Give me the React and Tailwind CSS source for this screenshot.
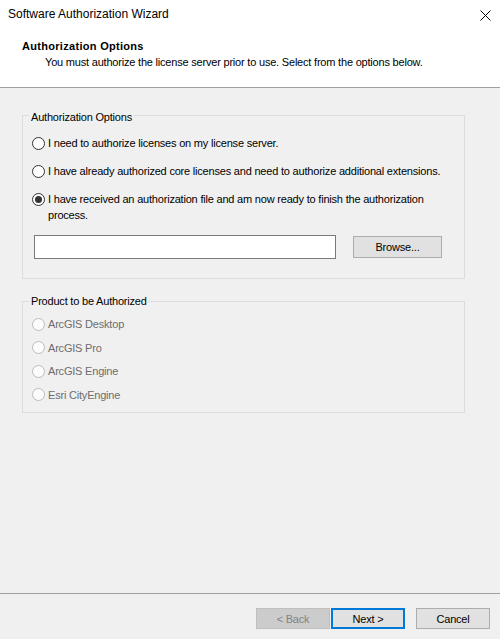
import React from 'react';

const Radio = ({ checked, disabled }) => (
	<span
		className={
			'flex items-center justify-center w-[13px] h-[13px] rounded-full border shrink-0 ' +
			(disabled ? 'border-[#bcbcbc] bg-[#fcfcfc]' : 'border-[#333333] bg-white')
		}
	>
		{checked && <span className="w-[7px] h-[7px] rounded-full bg-[#333333]" />}
	</span>
);

function Option({ children, checked, disabled }) {
	return (
		<label className="flex items-start gap-[3px]">
			<span className="h-[16px] flex items-center">
				<Radio checked={checked} disabled={disabled} />
			</span>
			<span className={disabled ? 'text-[#6d6d6d]' : 'text-black'}>{children}</span>
		</label>
	);
}

export default function App() {
	const products = ['ArcGIS Desktop', 'ArcGIS Pro', 'ArcGIS Engine', 'Esri CityEngine'];

	return (
		<div className="w-[500px] h-[639px] flex flex-col bg-[#f0f0f0] text-[11px] leading-[16px] tracking-[-0.2px] text-black font-['Liberation_Sans',Arial,sans-serif]">
			{/* header */}
			<div className="h-[88px] bg-white border-b border-[#a0a0a0] shrink-0">
				<div className="flex justify-between items-center pl-[8px] pr-[9px] pt-[6px]">
					<span className="text-[12px] tracking-normal">Software Authorization Wizard</span>
					<svg width="11" height="11" viewBox="0 0 11 11" className="mt-[2px]">
						<path d="M0.5 0.5 L10.5 10.5 M10.5 0.5 L0.5 10.5" stroke="#000" strokeWidth="1" />
					</svg>
				</div>
				<div className="mt-[16px] pl-[22px] font-bold tracking-[0.3px]">Authorization Options</div>
				<div className="pl-[45px]">
					You must authorize the license server prior to use. Select from the options below.
				</div>
			</div>

			{/* body */}
			<div className="flex-1 pl-[22px] pt-[19px]">
				<fieldset className="w-[443px] h-[172px] border border-[#dcdcdc]">
					<legend className="ml-[6px] px-[2px] relative top-[2px]">Authorization Options</legend>
					<div className="pl-[9px] pr-[6px]">
						<div className="flex flex-col gap-[12px] mt-[12px]">
							<Option>I need to authorize licenses on my license server.</Option>
							<Option>I have already authorized core licenses and need to authorize additional extensions.</Option>
							<Option checked>
								I have received an authorization file and am now ready to finish the authorization
								process.
							</Option>
						</div>
						<div className="flex items-center mt-[12px] ml-[2px]">
							<input
								type="text"
								className="w-[302px] h-[24px] bg-white border border-[#7a7a7a] outline-none px-1"
							/>
							<button className="ml-[17px] w-[89px] h-[22px] bg-[#e1e1e1] border border-[#adadad]">
								Browse...
							</button>
						</div>
					</div>
				</fieldset>

				<fieldset className="mt-[14px] w-[443px] h-[120px] border border-[#dcdcdc]">
					<legend className="ml-[6px] px-[2px]">Product to be Authorized</legend>
					<div className="flex flex-col gap-[7.5px] mt-[7px] pl-[9px]">
						{products.map((p) => (
							<Option key={p} disabled>
								{p}
							</Option>
						))}
					</div>
				</fieldset>
			</div>

			{/* footer */}
			<div className="h-[46px] border-t border-[#a0a0a0] shrink-0 flex justify-end items-start pt-[14px] pr-[10px]">
				<button className="w-[74px] h-[21px] bg-[#cccccc] border border-[#bfbfbf] text-[#838383]">
					&lt; Back
				</button>
				<button className="ml-[1px] w-[74px] h-[21px] bg-[#e1e1e1] border-2 border-[#0078d7]">
					Next &gt;
				</button>
				<button className="ml-[11px] w-[74px] h-[21px] bg-[#e1e1e1] border border-[#adadad]">
					Cancel
				</button>
			</div>
		</div>
	);
}
